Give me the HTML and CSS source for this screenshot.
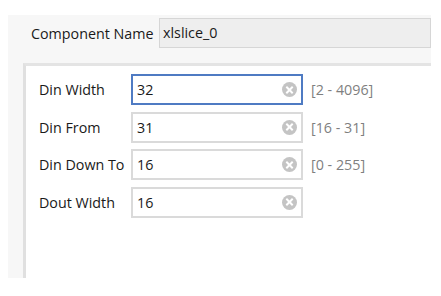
FILE: index.html
```html
<!DOCTYPE html>
<html lang="en">
<head>
  <meta charset="UTF-8">
  <title>xlslice</title>
  <link rel="stylesheet" href="styles.css">
</head>
<body>
  <div class="panel">
    <div class="name-row">
      <span class="name-label">Component Name</span>
      <div class="name-field">xlslice_0</div>
    </div>
    <div class="params">
      <div class="row">
        <span class="label">Din Width</span>
        <div class="field focused"><span>32</span><span class="clear"></span></div>
        <span class="range">[2 - 4096]</span>
      </div>
      <div class="row">
        <span class="label">Din From</span>
        <div class="field"><span>31</span><span class="clear"></span></div>
        <span class="range">[16 - 31]</span>
      </div>
      <div class="row">
        <span class="label">Din Down To</span>
        <div class="field"><span>16</span><span class="clear"></span></div>
        <span class="range">[0 - 255]</span>
      </div>
      <div class="row">
        <span class="label">Dout Width</span>
        <div class="field"><span>16</span><span class="clear"></span></div>
      </div>
    </div>
  </div>
</body>
</html>
```
FILE: styles.css
```css
body {
  margin: 0;
  background: #fff;
  font-family: "Open Sans", "Noto Sans", sans-serif;
  font-size: 14.3px;
  color: #1a1a1a;
}
.panel {
  margin: 15px 0 0 8px;
  width: 423px;
  height: 263px;
  background: #f7f7f7;
  display: flex;
  flex-direction: column;
}
.name-row {
  display: flex;
  align-items: center;
  padding-top: 3px;
  height: 30px;
}
.name-label {
  width: 128px;
  padding-left: 23px;
}
.name-field {
  flex: 1;
  height: 28px;
  line-height: 28px;
  background: #eeeeee;
  border: 1px solid #d6d6d6;
  padding-left: 3px;
}
.params {
  flex: 1;
  margin: 15px 0 0 15px;
  background: #fff;
  border-top: 3px solid #e4e4e4;
  border-left: 3px solid #e0e0e0;
  padding: 8px 0 0 13px;
  display: flex;
  flex-direction: column;
  gap: 6.6px;
}
.row {
  display: flex;
  align-items: center;
  height: 31px;
}
.label {
  width: 92px;
}
.field {
  box-sizing: border-box;
  width: 172px;
  height: 31px;
  border: 2px solid #dadada;
  display: flex;
  align-items: center;
  justify-content: space-between;
  padding: 0 4px 0 4px;
}
.field.focused {
  border-color: #4f7bc3;
}
.clear {
  width: 15px;
  height: 15px;
  border-radius: 50%;
  background: #c4c4c4;
  position: relative;
}
.clear::before,
.clear::after {
  content: "";
  position: absolute;
  left: 3px;
  top: 6.5px;
  width: 9px;
  height: 2px;
  background: #fff;
  transform: rotate(45deg);
}
.clear::after {
  transform: rotate(-45deg);
}
.range {
  margin-left: 8px;
  color: #7f7f7f;
}
```
